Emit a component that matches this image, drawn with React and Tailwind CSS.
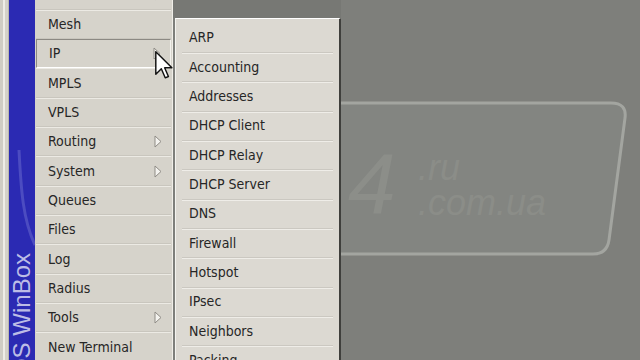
import React from 'react'

const mainItems = [
  { name: 'PPP', sub: true },
  { name: 'Mesh' },
  { name: 'IP', sub: true, active: true },
  { name: 'MPLS' },
  { name: 'VPLS' },
  { name: 'Routing', sub: true },
  { name: 'System', sub: true },
  { name: 'Queues' },
  { name: 'Files' },
  { name: 'Log' },
  { name: 'Radius' },
  { name: 'Tools', sub: true },
  { name: 'New Terminal' },
]

const ipItems = [
  'ARP', 'Accounting', 'Addresses', 'DHCP Client', 'DHCP Relay', 'DHCP Server',
  'DNS', 'Firewall', 'Hotspot', 'IPsec', 'Neighbors', 'Packing',
]

// little outlined arrow that marks a submenu
const SubArrow = () => (
  <svg width="8" height="13" viewBox="0 0 8 13" className="shrink-0">
    <polygon points="1,1 7,6.5 1,12" fill="#f4f3ef" stroke="#8f8c86" strokeWidth="1" />
  </svg>
)

const MainRow = ({ name, sub, active }) => (
  <div
    className={
      'h-[29.35px] shrink-0 flex items-center justify-between pl-[12px] pr-[9px] ' +
      (active
        ? 'border-t border-l border-t-[#8c8983] border-l-[#8c8983] border-b border-r border-b-white border-r-[#f2f1ec]'
        : 'border-b border-b-[#c9c6be] border-t border-t-[#eceae4]')
    }
  >
    <span>{name}</span>
    {sub && <SubArrow />}
  </div>
)

export default function App() {
  return (
    <div
      className="w-[640px] h-[360px] overflow-hidden flex bg-[#7e7f7b] text-[14px] text-[#262626] relative"
      style={{ fontFamily: '"DejaVu Sans Condensed", "DejaVu Sans", sans-serif', fontStretch: 'condensed' }}
    >
      {/* window frame strip */}
      <div className="w-[9px] shrink-0 bg-[#d4d1c9] border-l-[3px] border-l-[#cfccc4] border-r border-r-[#b9b6ae]">
        <div className="h-full w-[2px] bg-[#eeece6]" />
      </div>

      {/* blue WinBox band */}
      <div className="w-[26px] shrink-0 bg-[#2b2ab3] flex flex-col overflow-hidden pt-[253px] relative">
        <svg width="26" height="120" viewBox="0 0 26 120" className="absolute left-0 top-[150px]">
          <path d="M10 0 C 12 40, 14 70, 26 95" fill="none" stroke="#6e6ed0" strokeWidth="3" opacity="0.5" />
        </svg>
        <span
          className="rotate-180 [writing-mode:vertical-lr] whitespace-nowrap text-[24px] leading-[26px] text-[#bcbce6] self-center"
          style={{ fontFamily: '"Liberation Sans", Arial, sans-serif', fontStretch: 'normal' }}
        >
          RouterOS WinBox
        </span>
      </div>

      {/* main menu */}
      <div className="w-[138px] shrink-0 bg-[#d6d3cb] border-r border-r-[#f0eee8] overflow-hidden">
        <div className="flex flex-col -mt-[19.7px] pl-[1px] pr-[1px]">
          {mainItems.map((it) => (
            <MainRow key={it.name} {...it} />
          ))}
        </div>
      </div>

      {/* desktop area */}
      <div className="flex-1 relative bg-[#7e7f7b]">
        <div className="h-[18px] w-[168px] bg-[#777874]" />
        <svg width="467" height="360" viewBox="173 0 467 360" className="absolute left-0 top-0">
          <path
            d="M200 103 L611 103 Q627 103 625 118 L609 240 Q607 254 593 254 L190 254"
            fill="#838581"
            stroke="#a3a5a0"
            strokeWidth="3"
          />
          <text x="348" y="213" fontSize="86" fontStyle="italic" fill="#8c8e89" fontFamily="Liberation Sans, Arial, sans-serif">4</text>
          <text x="418" y="180" fontSize="36" fontStyle="italic" fill="#8b8d88" fontFamily="Liberation Sans, Arial, sans-serif">.ru</text>
          <text x="418" y="215" fontSize="36" fontStyle="italic" fill="#8b8d88" fontFamily="Liberation Sans, Arial, sans-serif">.com.ua</text>
        </svg>

        {/* IP submenu */}
        <div className="absolute left-[2px] top-[18px] w-[166px] h-[360px] bg-[#dcd9d2] border-t border-t-white border-l border-l-[#f4f3ef] border-r-2 border-r-[#3f3f3c] pt-[4.5px] px-[6px]">
          {ipItems.map((name) => (
            <div
              key={name}
              className="h-[29.35px] flex items-center pl-[7px] border-b border-b-[#cbc8c1] shadow-[0_1px_0_#efede8]"
            >
              {name}
            </div>
          ))}
        </div>
      </div>

      {/* mouse pointer */}
      <svg width="19" height="29" viewBox="0 0 13 20" className="absolute left-[155px] top-[51px]">
        <path d="M0.5 0.5 L0.5 16 L4.3 12.3 L7 18.5 L9.2 17.6 L6.6 11.6 L11.6 11.6 Z" fill="#ffffff" stroke="#111111" strokeWidth="1" strokeLinejoin="round" />
      </svg>
    </div>
  )
}
